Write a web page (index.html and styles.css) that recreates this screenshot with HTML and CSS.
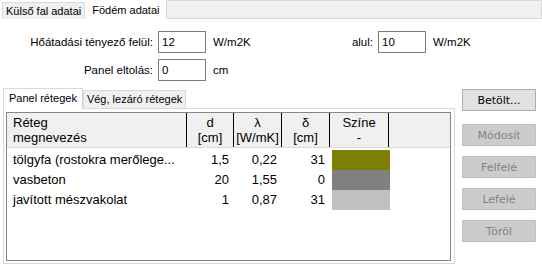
FILE: index.html
```html
<!DOCTYPE html>
<html>
<head>
	<meta charset="utf-8">
	<link rel="stylesheet" href="styles.css">
</head>
<body>
	<div class="tabbar">
		<div class="tab">Külső fal adatai</div>
		<div class="tab active">Födém adatai</div>
		<div class="tabfill"></div>
	</div>

	<div class="form">
		<div class="row">
			<label class="lbl">Hőátadási tényező felül:</label>
			<input class="field" type="text" value="12">
			<span class="unit wide">W/m2K</span>
			<label class="lbl2">alul:</label>
			<input class="field" type="text" value="10">
			<span class="unit">W/m2K</span>
		</div>
		<div class="row">
			<label class="lbl">Panel eltolás:</label>
			<input class="field" type="text" value="0">
			<span class="unit">cm</span>
		</div>
	</div>

	<div class="main">
		<div class="inner">
			<div class="subtabs">
				<div class="subtab active">Panel rétegek</div>
				<div class="subtab">Vég, lezáró rétegek</div>
			</div>
			<div class="panel">
				<div class="list">
					<div class="head">
						<div class="col c-name">Réteg<br>megnevezés</div>
						<div class="col c-num">d<br>[cm]</div>
						<div class="col c-num">λ<br>[W/mK]</div>
						<div class="col c-num">δ<br>[cm]</div>
						<div class="col c-color">Színe<br>-</div>
					</div>
					<div class="body">
						<div class="item">
							<div class="cell c-name">tölgyfa (rostokra merőlege...</div>
							<div class="cell c-val">1,5</div>
							<div class="cell c-val">0,22</div>
							<div class="cell c-val">31</div>
							<div class="swatch olive"></div>
						</div>
						<div class="item">
							<div class="cell c-name">vasbeton</div>
							<div class="cell c-val">20</div>
							<div class="cell c-val">1,55</div>
							<div class="cell c-val">0</div>
							<div class="swatch gray"></div>
						</div>
						<div class="item">
							<div class="cell c-name">javított mészvakolat</div>
							<div class="cell c-val">1</div>
							<div class="cell c-val">0,87</div>
							<div class="cell c-val">31</div>
							<div class="swatch silver"></div>
						</div>
					</div>
				</div>
			</div>
		</div>
		<div class="buttons">
			<button class="btn">Betölt...</button>
			<button class="btn first-off" disabled>Módosít</button>
			<button class="btn" disabled>Felfelé</button>
			<button class="btn" disabled>Lefelé</button>
			<button class="btn" disabled>Töröl</button>
		</div>
	</div>
</body>
</html>
```

FILE: styles.css
```css
body {
	margin: 0;
	background: #fff;
	font-family: "Liberation Sans", Arial, sans-serif;
	font-size: 11px;
	color: #000;
}

/* top tabs */
.tabbar {
	display: flex;
	align-items: flex-end;
	height: 19px;
	padding-left: 2px;
	white-space: nowrap;
}
.tab {
	height: 17px;
	line-height: 16px;
	padding: 0 3px;
	background: #f0f0f0;
	border: 1px solid #d9d9d9;
	border-bottom: none;
	box-sizing: border-box;
	font-size: 11px;
}
.tab.active {
	height: 19px;
	line-height: 18px;
	background: #fff;
	padding: 0 6px 0 6px;
	border-color: #fff;
}
.tabfill {
	flex: 1;
	height: 19px;
	background: #f0f0f0;
	border: 1px solid #d9d9d9;
	box-sizing: border-box;
}

/* form rows */
.form {
	padding-top: 12px;
	font-size: 11.5px;
}
.row {
	display: flex;
	align-items: center;
	height: 22px;
	margin-bottom: 6px;
}
.lbl {
	width: 153px;
	text-align: right;
	margin-right: 5px;
}
.lbl2 {
	width: 23px;
	text-align: right;
	margin-right: 5px;
}
.field {
	width: 48px;
	height: 22px;
	box-sizing: border-box;
	border: 1px solid #7a7a7a;
	padding: 0 3px;
	font: inherit;
	margin: 0;
}
.unit {
	margin-left: 7px;
}
.unit.wide {
	width: 137px;
}

/* lower part */
.main {
	display: flex;
	align-items: flex-start;
	margin-top: 3px;
	padding-left: 3px;
}
.inner {
	width: 452px;
}
.subtabs {
	display: flex;
	align-items: flex-end;
	height: 21px;
	white-space: nowrap;
	font-size: 11px;
}
.subtab {
	height: 18px;
	line-height: 17px;
	padding: 0 3px;
	background: #f0f0f0;
	border: 1px solid #d9d9d9;
	border-bottom: none;
	box-sizing: border-box;
}
.subtab.active {
	height: 21px;
	line-height: 19px;
	background: #fff;
	padding: 0 5px;
	margin-bottom: -1px;
	position: relative;
}
.panel {
	height: 156px;
	border: 1px solid #d9d9d9;
	box-sizing: border-box;
	padding: 3px 3px 2px 2px;
	background: #fff;
}
.list {
	height: 149px;
	border: 1px solid #828790;
	box-sizing: border-box;
	font-size: 13px;
	font-family: Arial, "Liberation Sans", sans-serif;
}
.head {
	display: flex;
	height: 34px;
	background: #f0f0f0;
	border-bottom: 1px solid #d9d9d9;
	line-height: 15px;
}
.col {
	border-right: 1px solid #000;
	box-sizing: border-box;
	padding-top: 2px;
}
.c-name {
	width: 180px;
	padding-left: 6px;
}
.head .c-num {
	width: 48px;
	text-align: center;
}
.head .c-num:nth-child(2) {
	width: 47px;
}
.c-color {
	width: 59px;
	text-align: center;
}
.body {
	padding-top: 2px;
}
.item {
	display: flex;
	height: 20px;
	line-height: 20px;
}
.cell.c-name {
	padding-left: 6px;
	box-sizing: border-box;
	white-space: nowrap;
}
.c-val {
	width: 48px;
	text-align: right;
	padding-right: 5px;
	box-sizing: border-box;
}
.c-val:nth-child(2) {
	width: 47px;
}
.swatch {
	width: 58px;
	height: 20px;
	margin-left: 2px;
}
.olive { background: #808000; }
.gray { background: #808080; }
.silver { background: #c0c0c0; }

/* side buttons */
.buttons {
	display: flex;
	flex-direction: column;
	gap: 10px;
	margin-left: 7px;
	padding-top: 2px;
}
.btn {
	width: 74px;
	height: 22px;
	background: #e1e1e1;
	border: 1px solid #adadad;
	font-family: "DejaVu Sans", sans-serif;
	font-size: 11px;
	color: #000;
	padding: 0;
	margin: 0;
}
.btn:disabled {
	background: #cccccc;
	border-color: #bfbfbf;
	color: #838383;
}
.first-off {
	margin-top: 3px;
}
```
